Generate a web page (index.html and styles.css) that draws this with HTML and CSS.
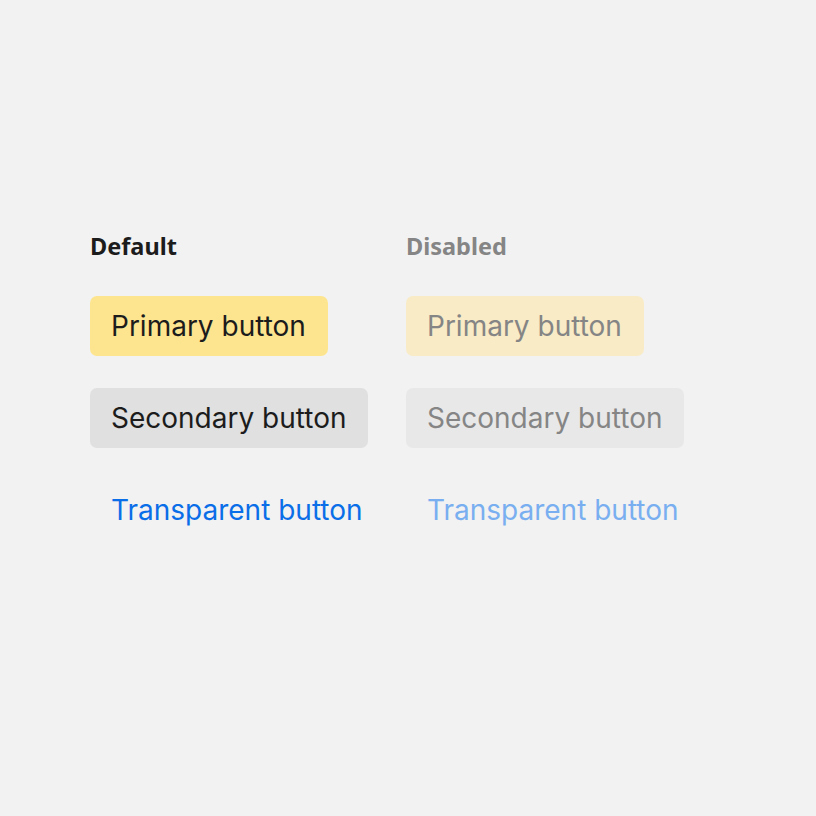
FILE: index.html
```html
<!DOCTYPE html>
<html>
<head>
<meta charset="utf-8">
<link rel="stylesheet" href="styles.css">
</head>
<body>
<div class="grid">
  <div class="col">
    <div class="label">Default</div>
    <button class="btn primary">Primary button</button>
    <button class="btn secondary">Secondary button</button>
    <button class="btn transparent">Transparent button</button>
  </div>
  <div class="col disabled">
    <div class="label">Disabled</div>
    <button class="btn primary">Primary button</button>
    <button class="btn secondary">Secondary button</button>
    <button class="btn transparent">Transparent button</button>
  </div>
</div>
</body>
</html>
```
FILE: styles.css
```css
html, body {
  margin: 0;
  padding: 0;
  background: #f2f2f2;
}
body {
  width: 816px;
  height: 816px;
  font-family: Inter, "Noto Sans", sans-serif;
}
.grid {
  display: grid;
  grid-template-columns: 316px 316px;
  padding: 230px 0 0 90px;
}
.col {
  display: flex;
  flex-direction: column;
  align-items: flex-start;
  gap: 32px;
}
.label {
  font-family: "Noto Sans", sans-serif;
  font-weight: 700;
  font-size: 23.5px;
  line-height: 32px;
  color: #1c1c1c;
  margin-bottom: 2px;
}
.btn {
  font-family: Inter, sans-serif;
  font-size: 28px;
  line-height: 60px;
  height: 60px;
  padding: 0 22px 0 21px;
  border: none;
  border-radius: 7px;
  color: #1c1c1c;
  background: transparent;
  cursor: pointer;
}
.primary { background: #fde58f; }
.secondary { background: #e0e0e0; }
.transparent { color: #0a6ee8; }
.disabled .label { color: #858585; }
.disabled .btn { color: #858585; }
.disabled .primary { background: #f8ebc5; }
.disabled .secondary { background: #e8e8e8; }
.disabled .transparent { color: #79aff0; background: transparent; }
```
